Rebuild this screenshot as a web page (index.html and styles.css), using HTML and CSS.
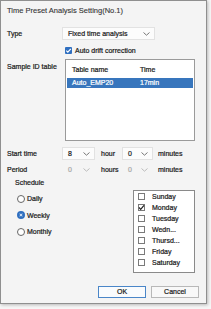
FILE: index.html
```html
<!DOCTYPE html>
<html>
<head>
<meta charset="utf-8">
<link rel="stylesheet" href="styles.css">
</head>
<body>
<div class="window">
  <div class="title">Time Preset Analysis Setting(No.1)</div>
  <div class="row r-type">
    <span class="lbl">Type</span>
    <div class="combo wide"><span class="val">Fixed time analysis</span><svg class="arr" width="7" height="4" viewBox="0 0 7 4"><polyline points="0.5,0.5 3.5,3.2 6.5,0.5" fill="none" stroke="#777" stroke-width="1"/></svg></div>
  </div>
  <div class="row r-check">
    <span class="lbl"></span>
    <span class="cb on"><svg width="7" height="7" viewBox="0 0 7 7"><polyline points="1.3,3.6 2.8,5.1 5.8,1.8" fill="none" stroke="#fff" stroke-width="1.2"/></svg></span>
    <span class="cbtext">Auto drift correction</span>
  </div>
  <div class="row r-table">
    <span class="lbl top">Sample ID table</span>
    <div class="table">
      <div class="thead"><span class="c1">Table name</span><span class="c2">Time</span></div>
      <div class="trow sel"><span class="c1">Auto_EMP20</span><span class="c2">17min</span></div>
    </div>
  </div>
  <div class="row r-time">
    <span class="lbl">Start time</span>
    <div class="combo small"><span class="val">8</span><svg class="arr" width="7" height="4" viewBox="0 0 7 4"><polyline points="0.5,0.5 3.5,3.2 6.5,0.5" fill="none" stroke="#777" stroke-width="1"/></svg></div>
    <span class="unit">hour</span>
    <div class="combo small2"><span class="val">0</span><svg class="arr" width="7" height="4" viewBox="0 0 7 4"><polyline points="0.5,0.5 3.5,3.2 6.5,0.5" fill="none" stroke="#777" stroke-width="1"/></svg></div>
    <span class="unit2">minutes</span>
  </div>
  <div class="row r-period">
    <span class="lbl">Period</span>
    <div class="combo small dis"><span class="val">0</span><svg class="arr" width="7" height="4" viewBox="0 0 7 4"><polyline points="0.5,0.5 3.5,3.2 6.5,0.5" fill="none" stroke="#bbb" stroke-width="1"/></svg></div>
    <span class="unit">hours</span>
    <div class="combo small2 dis"><span class="val">0</span><svg class="arr" width="7" height="4" viewBox="0 0 7 4"><polyline points="0.5,0.5 3.5,3.2 6.5,0.5" fill="none" stroke="#bbb" stroke-width="1"/></svg></div>
    <span class="unit2">minutes</span>
  </div>
  <div class="sched-label">Schedule</div>
  <div class="sched">
    <div class="radios">
      <div class="radio"><span class="rb"></span><span>Daily</span></div>
      <div class="radio"><span class="rb on"></span><span>Weekly</span></div>
      <div class="radio"><span class="rb"></span><span>Monthly</span></div>
    </div>
    <div class="days">
      <div class="day"><span class="dcb"></span><span>Sunday</span></div>
      <div class="day"><span class="dcb"><svg width="7" height="7" viewBox="0 0 7 7"><polyline points="1,3.5 2.7,5.3 6,1.3" fill="none" stroke="#222" stroke-width="1.2"/></svg></span><span>Monday</span></div>
      <div class="day"><span class="dcb"></span><span>Tuesday</span></div>
      <div class="day"><span class="dcb"></span><span>Wedn...</span></div>
      <div class="day"><span class="dcb"></span><span>Thursd...</span></div>
      <div class="day"><span class="dcb"></span><span>Friday</span></div>
      <div class="day"><span class="dcb"></span><span>Saturday</span></div>
    </div>
  </div>
  <div class="buttons">
    <div class="btn ok">OK</div>
    <div class="btn">Cancel</div>
  </div>
</div>
</body>
</html>
```
FILE: styles.css
```css
* { box-sizing: border-box; }
html, body { margin: 0; padding: 0; }
body {
  width: 211px;
  height: 309px;
  background: #f6f6f6;
  font-family: "Liberation Sans", Arial, sans-serif;
  font-size: 7px;
  color: #1c1c1c;
  -webkit-text-stroke: 0.22px currentColor;
  overflow: hidden;
}
.window {
  width: 207px;
  height: 304px;
  border: 1px solid #8f8f8f;
  background: #f4f4f4;
  box-shadow: 1px 1px 3px rgba(0,0,0,0.25);
  display: flex;
  flex-direction: column;
}
.title {
  height: 19px;
  line-height: 19px;
  padding-left: 6px;
  font-size: 7.5px;
  color: #333;
  -webkit-text-stroke: 0.1px currentColor;
}
.row {
  display: flex;
  align-items: center;
  padding-left: 6px;
}
.lbl { width: 55px; flex: none; }
.r-type { margin-top: 7px; height: 13px; }
.combo {
  display: flex;
  align-items: center;
  justify-content: space-between;
  height: 13px;
  background: #fcfcfc;
  border: 1px solid #e2e2e2;
  padding: 0 4px 0 5px;
}
.combo.wide { width: 93px; }
.combo.small { width: 33px; }
.combo.small2 { width: 31px; }
.combo.dis { background: transparent; border-color: transparent; color: #a8a8a8; }
.arr { display: block; }
.unit { width: 27px; padding-left: 6px; flex: none; }
.unit2 { padding-left: 5px; }
.r-check { margin-top: 5px; height: 10px; }
.cb {
  margin-left: 3px;
  width: 7px;
  height: 7px;
  background: #2f6fc0;
  border-radius: 1px;
  display: flex;
}
.cbtext { margin-left: 3px; }
.r-table { margin-top: 4px; height: 82px; align-items: flex-start; }
.lbl.top { margin-top: 3px; line-height: 10px; }
.table {
  margin-left: 3px;
  width: 130px;
  height: 82px;
  background: #fff;
  border: 1px solid #9a9a9a;
  padding: 1px;
}
.thead, .trow { display: flex; height: 10px; line-height: 10px; }
.thead { height: 16px; line-height: 16px; margin-top: 1px; }
.c1 { width: 73px; padding-left: 5px; }
.c2 { padding-left: 0; }
.trow.sel { background: #3876bd; color: #fff; }
.r-time { margin-top: 6px; height: 13px; }
.r-period { margin-top: 3px; height: 13px; }
.sched-label {
  margin-top: 2px;
  height: 10px;
  line-height: 10px;
  padding-left: 14px;
}
.sched { display: flex; }
.radios { width: 132px; padding-left: 16px; padding-top: 5px; }
.radio { display: flex; align-items: center; height: 11px; margin-bottom: 5.5px; }
.rb {
  width: 8px;
  height: 8px;
  border-radius: 50%;
  border: 1px solid #666;
  background: #fff;
  margin-right: 2px;
}
.rb.on { border: 2px solid #2f6fc0; background: #fff; box-shadow: inset 0 0 0 1px #2f6fc0; }
.days {
  margin-top: 2px;
  width: 62px;
  height: 83px;
  background: #fff;
  border: 1px solid #8a8a8a;
}
.day { display: flex; align-items: center; height: 11px; padding-left: 4px; }
.dcb {
  width: 7px;
  height: 7px;
  border: 1px solid #7a7a7a;
  background: #fff;
  margin-right: 7px;
  display: flex;
  align-items: center;
  justify-content: center;
}
.dcb svg { display: block; margin: -1px; }
.buttons {
  display: flex;
  justify-content: flex-end;
  gap: 5px;
  margin-top: 13px;
  padding-right: 7px;
}
.btn {
  width: 48px;
  height: 12px;
  line-height: 10px;
  text-align: center;
  border: 1px solid #b8b8b8;
  background: #f8f8f8;
}
.btn.ok { border-color: #4a86c8; background: #f9fbfd; }
```
